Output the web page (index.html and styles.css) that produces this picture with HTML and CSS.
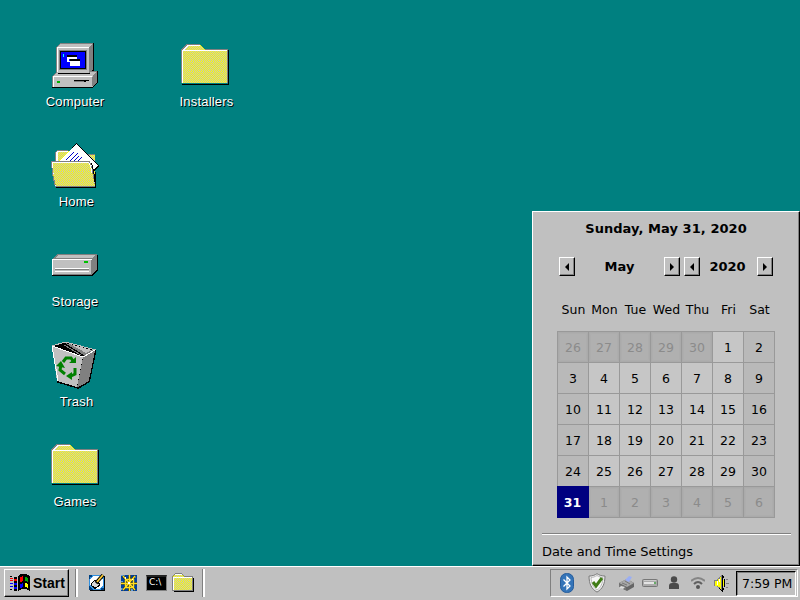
FILE: index.html
```html
<!DOCTYPE html>
<html lang="en">
<head>
<meta charset="utf-8">
<title>Desktop</title>
<link rel="stylesheet" href="styles.css">
</head>
<body>
<svg class="defs" width="0" height="0" aria-hidden="true">
  <defs>
    <pattern id="dither" width="2" height="2" patternUnits="userSpaceOnUse"><path fill="#c0c0c0" d="M0 0h2v2h-2z"/><path fill="#ff0" d="M0 0h1v1h-1zM1 1h1v1h-1z"/></pattern>
    <pattern id="dither-alt" width="2" height="2" patternUnits="userSpaceOnUse"><path fill="#ff0" d="M0 0h2v2h-2z"/><path fill="#c0c0c0" d="M0 0h1v1h-1zM1 1h1v1h-1z"/></pattern>
    <symbol id="folder" viewBox="0 1 48 48">
      <path fill="#808080" d="M0 9h1v-1h1v-1h1v-1h1v-1h1v-1h14v1h1v1h1v1h1v1h1v1h24v34h-47z"/>
      <path fill="url(#dither)" d="M1 10l5-5h13l5 5h22v33h-45z"/>
      <path fill="#fff" d="M1 10h45v1h-44v32h-1zM2 9h1v-1h1v-1h1v-1h1v-1h13v1h-12v1h-1v1h-1v1h-1v1h-2z"/>
      <path fill="#000" d="M47 10h1v35h-47v-1h46z"/>
      <path fill="#808080" d="M46 10h1v33h-1z"/>
    </symbol>
  </defs>
</svg>
<main class="desktop">
  <div class="column">
    <div class="item"><svg width="48" height="48" shape-rendering="crispEdges">
      <path fill="#000" d="M42 2h1v28h4v11l-5 6h-41v-1h40l4-7v-8h-4z"/>
      <path fill="#808080" d="M5 6l4-4h33v26l-4 4h-33zM1 35l5-5h40v11l-5 5h-40z"/>
      <path fill="#c0c0c0" d="M6 6l4-3h31l-3 3v26h-32zM2 35l4-4h39l-3 4v11h-40z"/>
      <path fill="#fff" d="M6 6h32v1h-31v24h-1zM2 35h39v1h-38v10h-1z"/>
      <path fill="#808080" d="M38 7l4-4v25l-4 4zM41 36l4-4v9l-4 4z"/>
      <path fill="#000" d="M7 32h32v1h-32z"/><path fill="#808080" d="M8 9h28v20h-28z"/>
      <path fill="#000" d="M9 10h26v18h-26z"/><path fill="#00f" d="M10 11h24v16h-24z"/>
      <path fill="#0ff" d="M12 13h1v3h-1z"/><path fill="#000" d="M16 14h10v2h-10z"/>
      <path fill="#fff" d="M16 16h10v5h-10z"/><path fill="#00f" d="M18 18h7v2h-7z"/><path fill="#000" d="M19 18h10v2h-10z"/><path fill="#fff" d="M19 20h10v5h-10z"/>
      <path fill="#00b000" d="M6 40h3v2h-3z"/><path fill="#000" d="M23 39h15v1h-15zM33 40h2v1h-2z"/><path fill="#808080" d="M23 40h10v1h-10z"/>
    </svg><span>Computer</span></div>
    <div class="item home"><svg width="48" height="48" shape-rendering="crispEdges">
      <path fill="#808080" d="M4 21v-10l2-2h11l3 4h24v33h-40z"/><path fill="url(#dither-alt)" d="M5 20v-9l2-1h10l4 4h23v31h-39z"/>
      <path fill="#fff" d="M5 20v-9h1v-1h11v1h-10v9z"/>
      <path fill="#000" d="M25 2l23 23-7 7-30-12z"/><path fill="#fff" d="M25 3l22 22-7 6-33-9z"/>
      <path fill="none" stroke="#00c" stroke-width="1.3" d="M15 19l8-8M19 20l8-8M23 20l5-5M27 20l4-4"/>
      <path fill="#000" d="M45 31v16h-40v-1h39v-15z"/>
      <path fill="#808080" d="M0 20h39l3 9 2 17h-40l-3-13z"/>
      <path fill="url(#dither)" d="M1 21h37l3 10 3 14h-39l-3-12z"/>
      <path fill="#fff" d="M1 21h37v1h-36v10h1v7h1v6h1v-1h-1v-5h-1v-6h-1zM38 22h1v2h-1zM39 24h1v3h-1zM40 27h1v5h-1z"/>
      <path fill="#000" d="M40 22h1v2h-1zM41 24h1v4h-1zM42 28h1v5h-1zM43 33h1v8h-1z"/>
    </svg><span>Home</span></div>
    <div class="item"><svg width="48" height="48" shape-rendering="crispEdges">
      <path fill="#000" d="M42 18l5-5v16l-6 6h-40v-1h40z"/><path fill="#808080" d="M1 18l5-5h40v15l-5 6h-40z"/>
      <path fill="#c0c0c0" d="M2 19h38v14h-38zM4 17l3-3h37l-3 3z"/><path fill="#fff" d="M1 18h40v1h-39v15h-1zM4 27h34v1h-34zM4 30h34v1h-34z"/>
      <path fill="#808080" d="M4 28h34v1h-34zM7 13h39v1h-39z"/><path fill="#00c000" d="M33 20h4v2h-4z"/>
    </svg><span>Storage</span></div>
    <div class="item home"><svg width="48" height="48" shape-rendering="crispEdges">
      <path fill="#000" d="M1 5l13-4 31 8-1 5-5 27-12 7-21-7z"/>
      <path fill="#c0c0c0" d="M1 5l31 11-6 30-20-6z"/><path fill="#808080" d="M32 16l12-6-6 30-12 7z"/>
      <path fill="#000" d="M3 5l11-3 18 9 1 4z"/><path fill="#808080" d="M14 2l30 8-10 5z"/>
      <path fill="#c0c0c0" d="M19 3l22 6-6 3z"/><path fill="none" stroke="#808080" d="M13 4l17 10"/>
      <path fill="none" stroke="#fff" d="M1 5l31 11 12-7M1 5l6 35"/><path fill="none" stroke="#c0c0c0" d="M1 5l13-4 31 8"/>
      <path fill="none" stroke="#000" d="M6 41l20 6 12-6 7-31"/>
      <g shape-rendering="auto" fill="none" stroke="#008000" stroke-width="3">
        <path d="M12 21l3-4h5l2 3M24 27v6l-4 2M10 24l-1 5 5 4"/>
        <path fill="#008000" stroke="none" d="M18 22h7v-6zM21 31v8l-6-4zM5 25l5-5 4 7z"/>
      </g>
    </svg><span>Trash</span></div>
    <div class="item"><svg width="48" height="48" shape-rendering="crispEdges"><use href="#folder" width="48" height="48"/></svg><span>Games</span></div>
  </div>
  <div class="column second">
    <div class="item"><svg width="48" height="48" shape-rendering="crispEdges"><use href="#folder" width="48" height="48"/></svg><span>Installers</span></div>
  </div>
</main>
<section class="calendar">
  <h1>Sunday, May 31, 2020</h1>
  <div class="nav">
    <button class="arrow prev"><i></i></button><b class="month">May</b><button class="arrow next"><i></i></button>
    <button class="arrow prev year-prev"><i></i></button><b class="year">2020</b><button class="arrow next"><i></i></button>
  </div>
  <div class="weekdays"><span>Sun</span><span>Mon</span><span>Tue</span><span>Wed</span><span>Thu</span><span>Fri</span><span>Sat</span></div>
  <div class="days">
    <span class="off">26</span><span class="off">27</span><span class="off">28</span><span class="off">29</span><span class="off">30</span><span>1</span><span class="end">2</span>
    <span class="end">3</span><span>4</span><span>5</span><span>6</span><span>7</span><span>8</span><span class="end">9</span>
    <span class="end">10</span><span>11</span><span>12</span><span>13</span><span>14</span><span>15</span><span class="end">16</span>
    <span class="end">17</span><span>18</span><span>19</span><span>20</span><span>21</span><span>22</span><span class="end">23</span>
    <span class="end">24</span><span>25</span><span>26</span><span>27</span><span>28</span><span>29</span><span class="end">30</span>
    <span class="today">31</span><span class="off">1</span><span class="off">2</span><span class="off">3</span><span class="off">4</span><span class="off">5</span><span class="off">6</span>
  </div>
  <div class="settings">Date and Time Settings</div>
</section>
<footer class="taskbar">
  <button class="start"><svg width="22" height="20" shape-rendering="crispEdges">
    <path fill="#000" d="M9 3l3-2h5l4 2v15l-4-2h-4l-4 2zM5 4h3v2h-3zM5 8h3v2h-3zM5 12h3v2h-3zM5 16h3v2h-3zM1 3h2v1h-2zM1 16h2v1h-2z"/>
    <path fill="#f00" d="M11 4l3-1v5l-3 1zM5 6h3v2h-3zM1 5h3v1h-3zM1 7h3v1h-3z"/><path fill="#0a0" d="M16 4l3 1v4l-3-1z"/>
    <path fill="#00f" d="M11 11l3-1v4l-3 1zM5 10h3v2h-3zM5 14h3v2h-3zM1 10h3v1h-3zM1 13h3v1h-3z"/><path fill="#ff0" d="M16 10l3 1v4l-3-1z"/>
  </svg>Start</button>
  <i class="divider"></i>
  <div class="launchers">
    <svg width="18" height="18" shape-rendering="crispEdges"><path fill="#000" d="M2 2h15v15h-15z"/><path fill="#3090e0" d="M1 1h15v15h-15z"/><path fill="#004080" d="M1 1h3v2h-2v2h-1zM1 12l4 4h-4zM13 14h3v2h-3z"/><path fill="#fff" d="M5 2h7l3 4v6l-4 3h-5l-4-4v-6z"/><path fill="#000" d="M3 9l4-3 5 3v3l-5 3-4-3z"/><path fill="#d8d8d8" d="M4 9l3-2 4 3-1 2-3 1-3-1z"/><g shape-rendering="auto" fill="none"><path stroke="#000" stroke-width="3.5" d="M8 9l7-8"/><path stroke="#fc3" stroke-width="1.8" d="M9 8l6-7"/></g></svg>
    <svg class="star" width="18" height="18"><path fill="#0040a0" d="M1 1h16v16h-16z"/><path fill="#60a0e0" d="M1 1h4v1h-4zM8 1h3v2h-3zM14 2h2v2h-2zM1 14h2v2h-2zM10 15h3v2h-3zM1 7h2v2h-2z"/><path fill="none" stroke="#221" stroke-width="2.6" d="M3 2l12 14M15 2l-12 14M9.500 1v16M1 9.500h16"/><path fill="none" stroke="#fd2" stroke-width="1.4" d="M3 2l12 14M15 2l-12 14M9.500 1v16M1 9.500h16M5.500 5.500h8v8h-8z"/><path fill="#fff" d="M8 8h2v2h-2zM5 3h1v2h-1zM12 5h1v1h-1z"/></svg>
    <span class="terminal">C:\</span>
    <svg class="small-folder" width="22" height="20" shape-rendering="crispEdges"><path fill="#000" d="M2 5h20v14h-20z"/><path fill="#808080" d="M0 4l3-4h7l2 3h9v15h-21z"/><path fill="url(#dither)" d="M1 4l2-3h7l2 3h8v13h-19z"/><path fill="#fff" d="M1 4h19v1h-18v12h-1zM3 1h7v1h-7z"/></svg>
  </div>
  <i class="divider last"></i>
  <div class="tray">
    <div class="status">
      <svg class="bt" width="14" height="20"><rect x=".5" y=".5" width="13" height="19" rx="6" fill="#3474b8" stroke="#245c9c"/><path fill="none" stroke="#fff" stroke-width="1.3" d="M3.500 6.500l6.500 6.500-3 3v-12l3 3-6.500 6.500"/></svg>
      <svg class="shield" width="18" height="20"><path fill="#f7f7f7" stroke="#777" d="M9 .7c2 1.500 5 2.400 8 2.400-.2 8-2.300 12.600-8 16-5.700-3.400-7.800-8-8-16 3 0 6-.9 8-2.400z"/><path fill="none" stroke="#b7b7b7" d="M9 2.500c2 1.200 4 2 6 2-.4 6-2 10-6 12.600-4-2.600-5.600-6.600-6-12.600 2 0 4-.8 6-2z"/><path fill="none" stroke="#407c16" stroke-width="3" d="M5 9l3 4 6-8"/></svg>
      <svg class="printer" width="17" height="16"><path fill="#666" d="M1 8l8-4 7 4v4l-7 4-8-4z"/><path fill="#a8a8a8" d="M1 8l8-4 7 4-7 4z"/><path fill="#9aaef4" d="M7 5l4-4 3 1-3 5z"/><path fill="#777" d="M1 9l7 3v3l-7-3z"/><path fill="#ddd" d="M3 11l4 1-2 2-4-1z"/><path stroke="#777" d="M4 8l5 2M7 6l5 3"/></svg>
      <svg class="disk" width="16" height="8"><rect x=".5" y=".5" width="15" height="7" rx="1" fill="#aaa" stroke="#777"/><path fill="#e4e4e4" d="M2 3h10v2h-10z"/><path fill="#6a6" d="M12 3h2v2h-2z"/><path fill="#ccc" d="M2 1h12v1h-12z"/></svg>
      <svg class="user" width="12" height="14"><circle cx="6" cy="3.5" r="3.2" fill="#4b4b4b"/><path fill="#4b4b4b" d="M1 13v-3q0-3 3-3h4q3 0 3 3v3z"/></svg>
      <svg class="wifi" width="14" height="14"><path fill="none" stroke="#858585" stroke-width="2" d="M0 5q7-6 14 0"/><path fill="none" stroke="#606060" stroke-width="2" d="M3 8q4-4 8 0"/><circle cx="7" cy="11" r="2" fill="#555"/></svg>
      <svg class="volume" width="16" height="17" shape-rendering="crispEdges"><path fill="#808080" d="M0 5h3v-1h1v-1h1v-1h1v-1h1v-1h2v16h-2v-1h-1v-1h-1v-1h-1v-1h-1v-1h-3z"/><path fill="#ff0" d="M1 6h3v-2h2v-2h1v12h-1v-2h-2v-1h-3z"/><path fill="#fff" d="M3 6h1v4h-1zM5 4h1v3h-1z"/><path fill="#000" d="M8 0h1v17h-1v-1h-1v-1h-1v-1h-1v-1h1v1h1v1h1zM10 4h1v8h-1zM9 1h1v2h-1zM9 13h1v2h-1z"/><path fill="#ff0" d="M9 5h1v6h-1z"/><path fill="#808080" d="M12 4h2v1h-2zM12 8h3v1h-3zM12 12h2v1h-2z"/></svg>
    </div>
    <div class="clock">7:59 PM</div>
  </div>
</footer>
</body>
</html>
```
FILE: styles.css
```css
* { box-sizing: border-box; }
body { margin: 0; width: 800px; height: 600px; overflow: hidden; background: #008080; color: #000; font-family: "DejaVu Sans", sans-serif; font-size: 13px; }
svg { display: block; flex: none; }
.defs { position: absolute; }
button { font: inherit; color: inherit; border: 0; padding: 0; background: #c0c0c0; }

.desktop { display: flex; height: 566px; padding: 41px 0 0 25px; }
.column { width: 100px; }
.second { margin-left: 31px; }
.second svg { margin-right: 2px; }
.item { height: 100px; display: flex; flex-direction: column; align-items: center; color: #fff; font: 13px/16px "Liberation Sans", sans-serif; letter-spacing: .2px; text-shadow: 1px 1px 0 #000; }
.item span { margin-top: 5px; }
.home span { padding-left: 3px; }
.second span { padding-left: 1px; }

.calendar { position: absolute; left: 532px; top: 211px; width: 268px; height: 355px; background: #c0c0c0; border: 1px solid; border-color: #fff #000 #000 #fff; box-shadow: inset -1px -1px #808080; }
.calendar h1 { margin: 9px 0 0; text-align: center; font-size: 13px; line-height: 16px; letter-spacing: .05px; }
.nav { display: flex; align-items: center; height: 19px; margin: 20px 0 0 26px; }
.arrow, .start { border: 1px solid; border-color: #fff #000 #000 #fff; box-shadow: inset -1px -1px #808080; }
.arrow { display: flex; align-items: center; justify-content: center; width: 16px; height: 19px; }
.arrow i { border: 4px solid transparent; }
.prev i { border-right-color: #000; border-left: 0; }
.next i { border-left-color: #000; border-right: 0; }
.month { width: 89px; text-align: center; }
.year { width: 57px; text-align: center; padding-right: 2px; }
.year-prev { margin-left: 4px; }
.weekdays { display: grid; grid-template-columns: repeat(7, 31px); justify-items: center; margin: 26px 0 0 25px; line-height: 16px; font-size: 12.5px; }
.days { display: grid; grid-template-columns: repeat(7, 31px); grid-auto-rows: 31px; width: 218px; margin: 13px 0 0 24px; border: 1px solid #999; border-width: 1px 0 0 1px; font-size: 12.5px; }
.days span { display: flex; align-items: center; justify-content: center; padding-top: 1px; border: 1px solid #999; border-width: 0 1px 1px 0; background: #c6c6c6; }
.days .end { background: #b9b9b9; }
.days .off { color: #8b8b8b; background: #b0b0b0; box-shadow: inset 0 0 2px 1px #a9a9a9; }
.days .today { margin: -1px 0 0 -1px; padding-top: 2px; background: #000080; border-color: #000080; color: #fff; font-weight: bold; }
.settings { margin: 15px 8px 0 9px; padding-top: 10px; background: linear-gradient(#808080 0 1px, #fff 1px 2px, transparent 2px); line-height: 18px; letter-spacing: -.1px; }

.taskbar { display: flex; height: 34px; border-top: 1px solid #fff; padding: 2px 2px 3px 4px; background: #c0c0c0; }
.start { display: flex; align-items: center; gap: 2px; width: 65px; height: 28px; padding-left: 4px; font: bold 14px "Liberation Sans", sans-serif; }
.divider { width: 3px; height: 28px; margin-left: 6px; border-left: 1px solid #808080; border-right: 2px solid #fff; }
.launchers { display: flex; align-items: center; width: 116px; padding-left: 10px; }
.star { margin-left: 14px; }
.terminal { width: 21px; height: 16px; margin-left: 8px; padding-left: 2px; border: 1px solid #808080; border-top: 2px solid #222; background: #000; color: #fff; font: 9px/11px "DejaVu Sans", sans-serif; }
.small-folder { margin-left: 5px; }
.last { margin-left: 8px; }
.tray { display: flex; width: 248px; height: 28px; margin-left: auto; border: 1px solid; border-color: #808080 #fff #fff #808080; }
.status { display: flex; align-items: center; width: 185px; padding-left: 9px; }
.shield { margin-left: 14px; }
.printer { margin-left: 12px; }
.disk { margin-left: 7px; }
.user { margin-left: 10px; }
.wifi { margin-left: 11px; }
.volume { margin-left: 9px; }
.clock { width: 60px; height: 25px; margin-top: 1px; padding-left: 5px; border: 1px solid; border-color: #000 #fff #fff #000; box-shadow: inset 1px 1px #808080; line-height: 24px; font-size: 12.5px; white-space: nowrap; }
```
